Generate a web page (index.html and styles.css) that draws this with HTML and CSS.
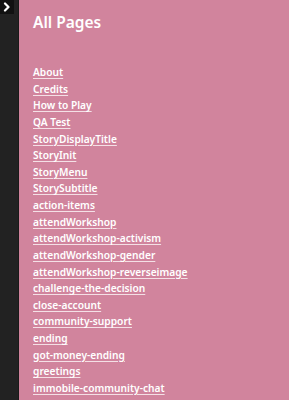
FILE: index.html
```html
<!DOCTYPE html>
<html>
<head>
<meta charset="utf-8">
<link rel="stylesheet" href="styles.css">
</head>
<body>
<div class="app">
  <aside class="sidebar">
    <button class="toggle" aria-label="Toggle sidebar">
      <svg width="10" height="10" viewBox="0 0 10 10"><path d="M3 1.5 L6.5 5 L3 8.5" fill="none" stroke="#fff" stroke-width="2.2" stroke-linecap="round" stroke-linejoin="round"/></svg>
    </button>
  </aside>
  <main class="content">
    <h1 class="title">All Pages</h1>
    <ul class="pages">
      <li><a href="#">About</a></li>
      <li><a href="#">Credits</a></li>
      <li><a href="#">How to Play</a></li>
      <li><a href="#">QA Test</a></li>
      <li><a href="#">StoryDisplayTitle</a></li>
      <li><a href="#">StoryInit</a></li>
      <li><a href="#">StoryMenu</a></li>
      <li><a href="#">StorySubtitle</a></li>
      <li><a href="#">action-items</a></li>
      <li><a href="#">attendWorkshop</a></li>
      <li><a href="#">attendWorkshop-activism</a></li>
      <li><a href="#">attendWorkshop-gender</a></li>
      <li><a href="#">attendWorkshop-reverseimage</a></li>
      <li><a href="#">challenge-the-decision</a></li>
      <li><a href="#">close-account</a></li>
      <li><a href="#">community-support</a></li>
      <li><a href="#">ending</a></li>
      <li><a href="#">got-money-ending</a></li>
      <li><a href="#">greetings</a></li>
      <li><a href="#">immobile-community-chat</a></li>
    </ul>
  </main>
</div>
</body>
</html>
```
FILE: styles.css
```css
html, body {
  margin: 0;
  padding: 0;
  height: 100%;
  overflow: hidden;
}
body {
  font-family: "Noto Sans", sans-serif;
  background: #d1849d;
}
.app {
  display: flex;
  height: 400px;
}
.sidebar {
  width: 19px;
  flex: 0 0 19px;
  background: #222222;
  border-right: 1px solid #1a1a1a;
  box-sizing: border-box;
}
.toggle {
  display: flex;
  align-items: center;
  justify-content: center;
  width: 14px;
  height: 14px;
  padding: 0;
  margin: 0;
  border: none;
  background: #111;
}
.content {
  flex: 1;
  background: #d1849d;
  padding: 12px 0 0 14px;
  color: #fff;
}
.title {
  margin: 0;
  font-size: 15.5px;
  font-weight: 600;
  line-height: 21px;
  color: #fff;
}
.pages {
  list-style: none;
  margin: 31px 0 0 0;
  padding: 0;
}
.pages li {
  font-size: 10.2px;
  line-height: 16.63px;
  height: 16.63px;
}
.pages a {
  color: #fff;
  font-weight: 600;
  text-decoration: underline;
  text-decoration-color: rgba(255,255,255,0.75);
  text-underline-offset: 2px;
}
```
